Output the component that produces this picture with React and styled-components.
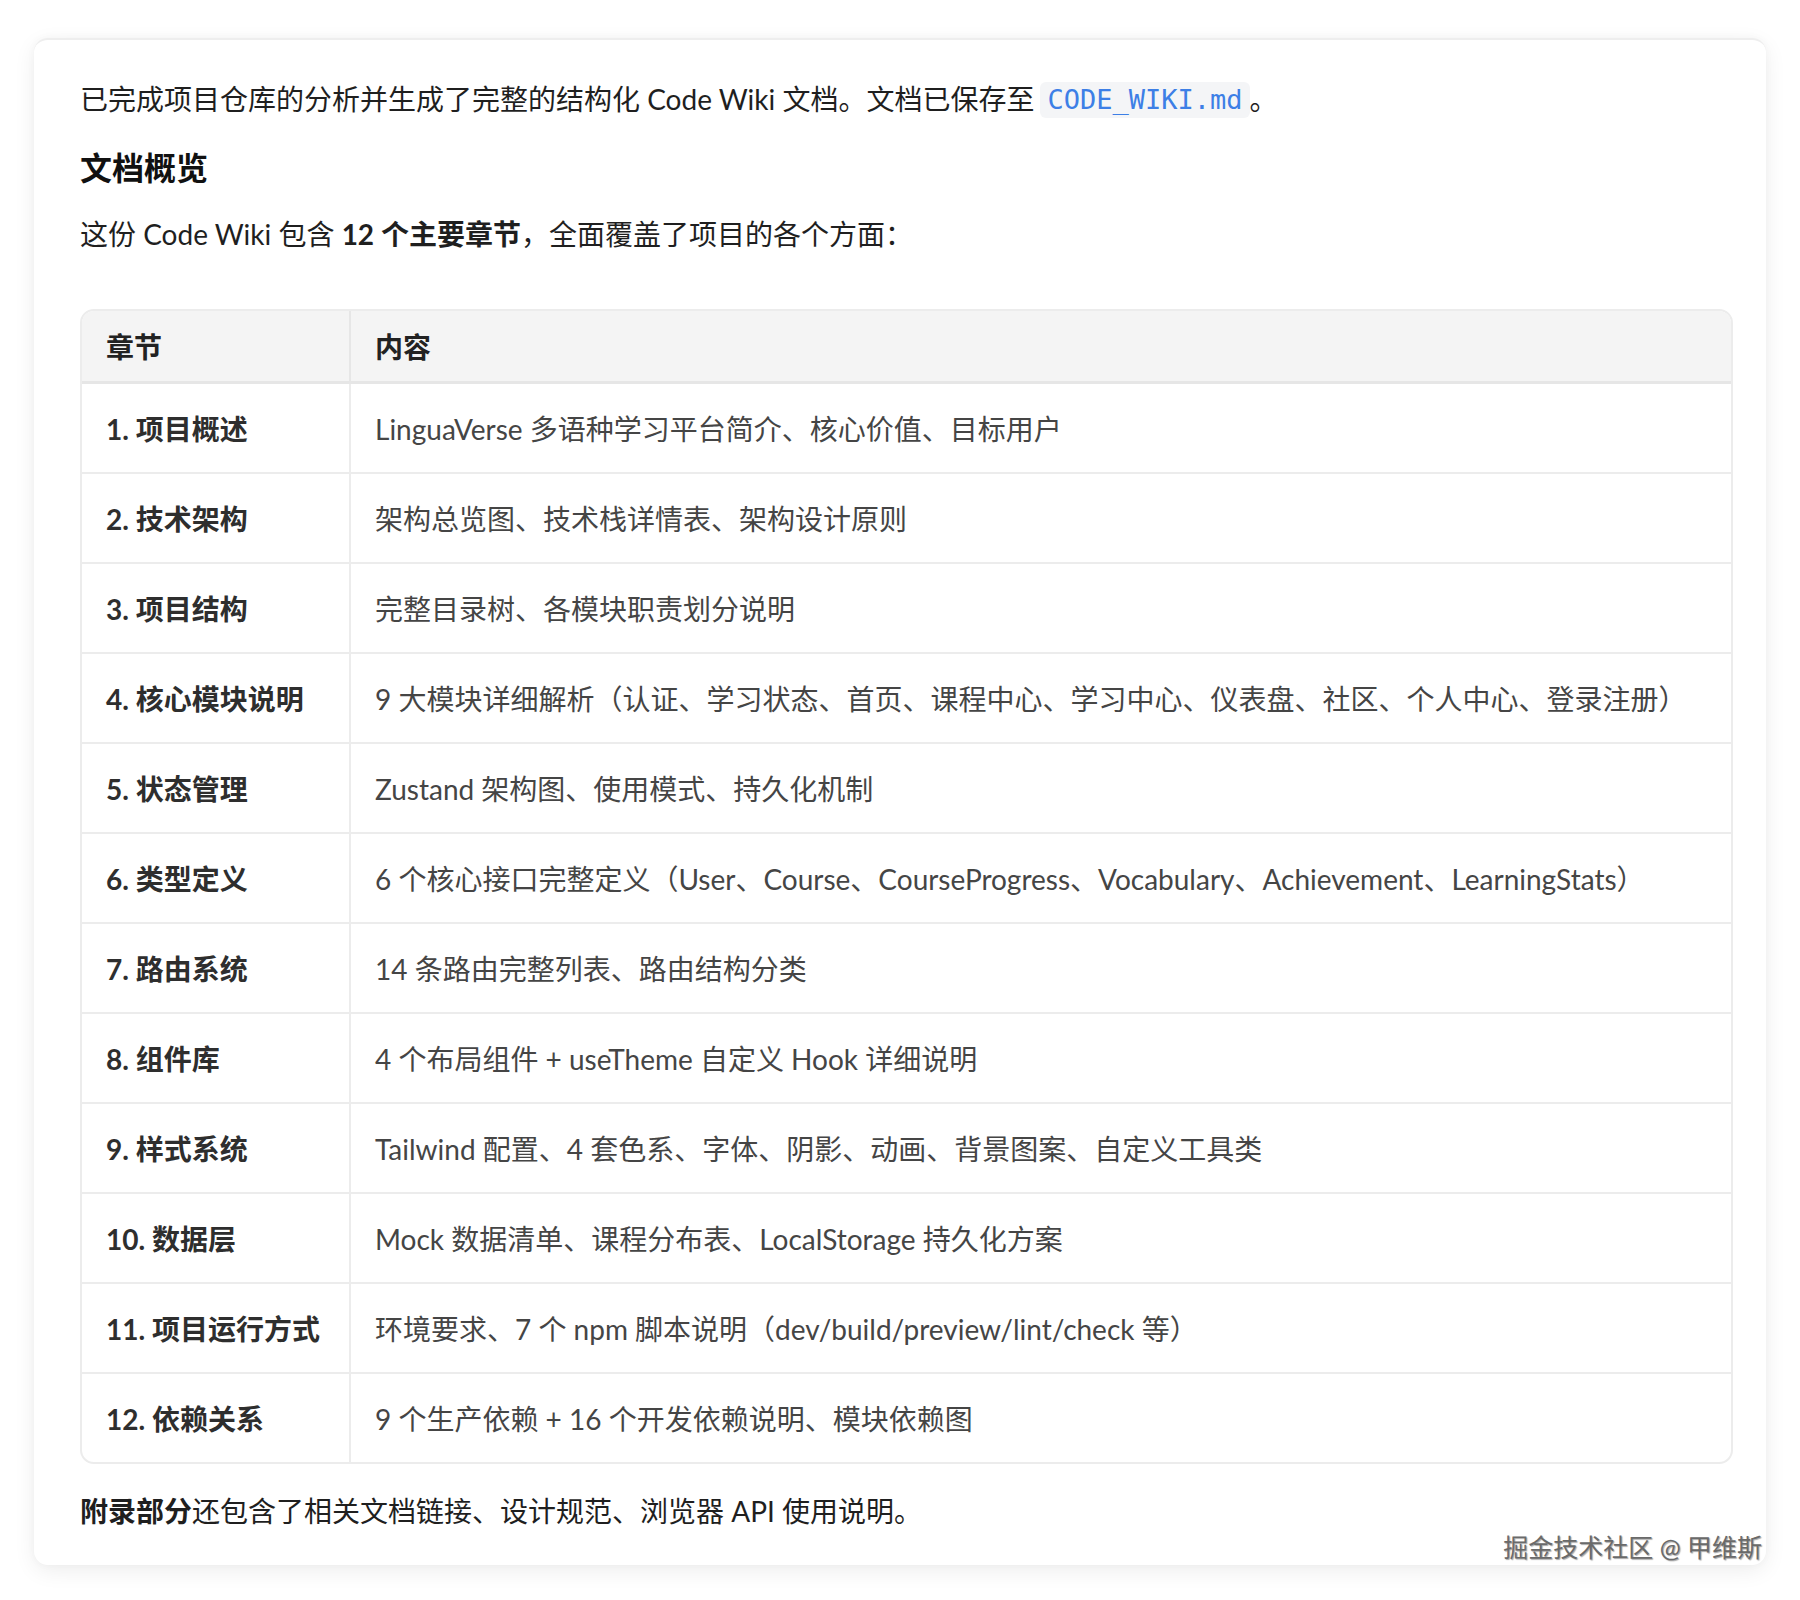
import React from "react";
import styled, { createGlobalStyle } from "styled-components";

const GlobalStyle = createGlobalStyle`
  html, body {
    margin: 0;
    padding: 0;
    background: #ffffff;
  }
  body {
    font-family: "Lato", "Noto Sans CJK SC", sans-serif;
    color: #1f1f1f;
  }
`;

const Page = styled.div`
  padding: 38px 0 0 34px;
  width: 1800px;
  height: 1600px;
  box-sizing: border-box;
`;

const Card = styled.div`
  position: relative;
  width: 1732px;
  height: 1527px;
  box-sizing: border-box;
  padding: 35px 33px 0 46px;
  background: #fff;
  border-top: 2px solid #eeeeee;
  border-radius: 14px;
  box-shadow: 0 6px 22px rgba(0, 0, 0, 0.07), 0 0 8px rgba(0, 0, 0, 0.03);
`;

const Para = styled.p`
  margin: ${(p) => p.$m || "0"};
  font-size: 28px;
  line-height: 48px;
  color: #1f1f1f;
`;

const Heading = styled.h3`
  margin: 21px 0 18px;
  font-size: 32px;
  line-height: 48px;
  font-weight: 700;
  color: #111;
`;

const Code = styled.code`
  display: inline-block;
  font-family: "DejaVu Sans Mono", "Liberation Mono", monospace;
  font-size: 27px;
  line-height: 36px;
  padding: 0 7px;
  margin: 0 0 0 6px;
  color: #3d7fe6;
  background: #f4f5f7;
  border-radius: 6px;
  vertical-align: 1px;
`;

const TableWrap = styled.div`
  margin-top: 51px;
  border: 2px solid #ececec;
  border-radius: 14px;
  overflow: hidden;
`;

const Table = styled.table`
  width: 100%;
  border-collapse: collapse;
  font-size: 28px;
`;

const Th = styled.th`
  height: 70px;
  padding: 0 24px;
  text-align: left;
  font-weight: 700;
  color: #222;
  background: #f4f4f4;
  border-bottom: 3px solid #e6e6e6;
  border-left: ${(p) => (p.$first ? "none" : "2px solid #e6e6e6")};
  width: ${(p) => (p.$first ? "219px" : "auto")};
`;

const Td = styled.td`
  height: 88px;
  padding: 0 24px;
  color: ${(p) => (p.$first ? "#2e2e2e" : "#454545")};
  font-weight: ${(p) => (p.$first ? 700 : 400)};
  border-top: 2px solid #ececec;
  border-left: ${(p) => (p.$first ? "none" : "2px solid #ececec")};
  white-space: nowrap;
`;

const Watermark = styled.div`
  position: absolute;
  right: 4px;
  bottom: 1px;
  font-size: 25px;
  line-height: 34px;
  color: #6a6a6a;
  text-shadow: 1px 1px 1px rgba(0, 0, 0, 0.35), -1px -1px 0 #fff;
`;

const rows = [
  ["1. 项目概述", "LinguaVerse 多语种学习平台简介、核心价值、目标用户"],
  ["2. 技术架构", "架构总览图、技术栈详情表、架构设计原则"],
  ["3. 项目结构", "完整目录树、各模块职责划分说明"],
  ["4. 核心模块说明", "9 大模块详细解析（认证、学习状态、首页、课程中心、学习中心、仪表盘、社区、个人中心、登录注册）"],
  ["5. 状态管理", "Zustand 架构图、使用模式、持久化机制"],
  ["6. 类型定义", "6 个核心接口完整定义（User、Course、CourseProgress、Vocabulary、Achievement、LearningStats）"],
  ["7. 路由系统", "14 条路由完整列表、路由结构分类"],
  ["8. 组件库", "4 个布局组件 + useTheme 自定义 Hook 详细说明"],
  ["9. 样式系统", "Tailwind 配置、4 套色系、字体、阴影、动画、背景图案、自定义工具类"],
  ["10. 数据层", "Mock 数据清单、课程分布表、LocalStorage 持久化方案"],
  ["11. 项目运行方式", "环境要求、7 个 npm 脚本说明（dev/build/preview/lint/check 等）"],
  ["12. 依赖关系", "9 个生产依赖 + 16 个开发依赖说明、模块依赖图"],
];

const App = () => {
  return (
    <>
      <GlobalStyle />
      <Page>
        <Card>
          <Para>
            已完成项目仓库的分析并生成了完整的结构化 Code Wiki 文档。文档已保存至
            <Code>CODE_WIKI.md</Code>。
          </Para>
          <Heading>文档概览</Heading>
          <Para>
            这份 Code Wiki 包含 <b>12 个主要章节</b>，全面覆盖了项目的各个方面：
          </Para>
          <TableWrap>
            <Table>
              <thead>
                <tr>
                  <Th $first>章节</Th>
                  <Th>内容</Th>
                </tr>
              </thead>
              <tbody>
                {rows.map((r, i) => (
                  <tr key={i}>
                    <Td $first>{r[0]}</Td>
                    <Td>{r[1]}</Td>
                  </tr>
                ))}
              </tbody>
            </Table>
          </TableWrap>
          <Para $m="23px 0 0">
            <b>附录部分</b>还包含了相关文档链接、设计规范、浏览器 API 使用说明。
          </Para>
          <Watermark>掘金技术社区 @ 甲维斯</Watermark>
        </Card>
      </Page>
    </>
  );
};

export default App;
